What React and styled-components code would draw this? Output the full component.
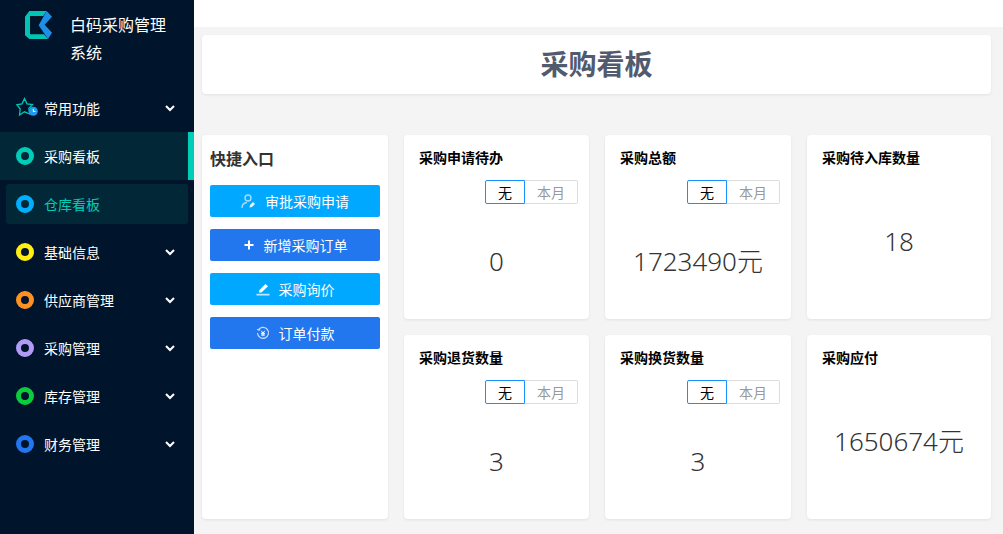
import React from 'react';
import styled, { createGlobalStyle } from 'styled-components';

const GlobalStyle = createGlobalStyle`
  html, body {
    margin: 0;
    padding: 0;
    background: #f4f4f4;
  }
  body {
    font-family: "Noto Sans CJK SC", "Noto Sans", sans-serif;
  }
`;

const menu = [
  { label: '采购看板', ring: '#00cdb8', active: true },
  { label: '仓库看板', ring: '#00b0ff', hover: true },
  { label: '基础信息', ring: '#ffee11', arrow: true },
  { label: '供应商管理', ring: '#ff9022', arrow: true },
  { label: '采购管理', ring: '#b09cf5', arrow: true },
  { label: '库存管理', ring: '#0ccb3c', arrow: true },
  { label: '财务管理', ring: '#2277f0', arrow: true },
];

const stats = [
  { title: '采购申请待办', value: '0', toggle: true },
  { title: '采购总额', value: '1723490元', toggle: true },
  { title: '采购待入库数量', value: '18' },
  { title: '采购退货数量', value: '3', toggle: true },
  { title: '采购换货数量', value: '3', toggle: true },
  { title: '采购应付', value: '1650674元' },
];

const UserIcon = () => (
  <svg width="15" height="15" viewBox="0 0 15 15" fill="none" stroke="#a9dcff" strokeWidth="1.4">
    <circle cx="7" cy="4" r="3" />
    <path d="M1 14c0-3.500 2-5.200 5-5.500" />
    <path d="M8.500 13.500l.5-2.500 3-3 2 2-3 3z" fill="#e4f5ff" stroke="none" />
  </svg>
);

const PlusIcon = () => (
  <svg width="12" height="12" viewBox="0 0 12 12" fill="none" stroke="#fff" strokeWidth="2">
    <path d="M6 1.500v9M1.500 6h9" />
  </svg>
);

const PenIcon = () => (
  <svg width="14" height="14" viewBox="0 0 14 14">
    <path d="M3 8.500L9.500 2l2.500 2.200-6.500 6.300H3z" fill="#fff" />
    <rect x="0.500" y="11.800" width="13" height="1.700" fill="#bfe9ff" />
  </svg>
);

const PayIcon = () => (
  <svg width="14" height="14" viewBox="0 0 14 14" fill="none" stroke="#c5d9fa" strokeWidth="1.200">
    <path d="M2 4.500A5.500 5.500 0 1 1 1.500 7" />
    <path d="M1 3.500h2.500v1" />
    <path d="M5.200 4.800L7 7l1.800-2.200M5 7.300h4M5 9h4M7 7v3.200" stroke="#fff" strokeWidth="1" />
  </svg>
);

const actions = [
  { label: '审批采购申请', tone: '#00a8ff', icon: <UserIcon /> },
  { label: '新增采购订单', tone: '#2277ee', icon: <PlusIcon /> },
  { label: '采购询价', tone: '#00a8ff', icon: <PenIcon /> },
  { label: '订单付款', tone: '#2277ee', icon: <PayIcon /> },
];

const Logo = () => (
  <LogoMark width="27" height="28" viewBox="15 15 81 84">
    <path d="M15 32L28 15h52L70 30H30v55h42l12 14H28L15 88z" fill="#00c4b4" />
    <path d="M80 15l16 17-22 24 22 24-12 19-28-41z" fill="#1c8fe8" />
  </LogoMark>
);

const StarIcon = () => (
  <StarMark width="22" height="22" viewBox="0 0 22 22" fill="none">
    <path
      d="M8.500 1.500L11 6.800l5.500.7-3.700 4 1 5.500-5.300-2.200-5 3.200.7-6L.8 7.800 6 6.800z"
      stroke="#00c4b4"
      strokeWidth="1.300"
    />
    <circle cx="17.300" cy="14.300" r="4.500" fill="#1f9bf0" />
    <path d="M17.300 12v2.500h2.200" stroke="#fff" strokeWidth="1" />
  </StarMark>
);

const Chevron = () => (
  <svg width="10" height="7" viewBox="0 0 10 7" fill="none" stroke="#fff" strokeWidth="2">
    <path d="M1 1l4 4 4-4" />
  </svg>
);

const App = () => (
  <Page>
    <GlobalStyle />
    <Sidebar>
      <Brand>
        <Logo />
        <BrandName>白码采购管理系统</BrandName>
      </Brand>
      <MenuRow>
        <IconSlot><StarIcon /></IconSlot>
        <MenuLabel>常用功能</MenuLabel>
        <Chevron />
      </MenuRow>
      {menu.map((item) => (
        <MenuRow key={item.label} $active={item.active} $hover={item.hover}>
          <IconSlot><Ring $color={item.ring} /></IconSlot>
          <MenuLabel $accent={item.hover}>{item.label}</MenuLabel>
          {item.arrow && <Chevron />}
        </MenuRow>
      ))}
    </Sidebar>
    <Main>
      <TopBar />
      <Content>
        <TitleCard>采购看板</TitleCard>
        <Board>
          <QuickCard>
            <QuickTitle>快捷入口</QuickTitle>
            {actions.map((action) => (
              <ActionButton key={action.label} $tone={action.tone}>
                {action.icon}
                {action.label}
              </ActionButton>
            ))}
          </QuickCard>
          {stats.map((stat) => (
            <StatCard key={stat.title}>
              <StatTitle>{stat.title}</StatTitle>
              {stat.toggle && (
                <Toggle>
                  <ToggleItem $on>无</ToggleItem>
                  <ToggleItem>本月</ToggleItem>
                </Toggle>
              )}
              <StatValue $raised={!stat.toggle}>{stat.value}</StatValue>
            </StatCard>
          ))}
        </Board>
      </Content>
    </Main>
  </Page>
);

export default App;

// Styles
const Page = styled.div`
  display: flex;
  width: 1003px;
  height: 534px;
  overflow: hidden;
`;

const Sidebar = styled.aside`
  flex: 0 0 194px;
  background: #00152b;
  color: #fff;
`;

const Brand = styled.div`
  display: flex;
  align-items: flex-start;
  height: 84px;
  padding: 11px 0 0 25px;
  box-sizing: border-box;
`;

const LogoMark = styled.svg`
  flex-shrink: 0;
  margin-right: 18px;
`;

const BrandName = styled.div`
  width: 100px;
  margin-top: -1px;
  font-size: 16px;
  line-height: 28px;
`;

const MenuRow = styled.div`
  display: flex;
  align-items: center;
  height: 48px;
  padding: 0 19px 0 16px;
  box-sizing: border-box;
  font-size: 14px;
  ${(p) => p.$active && `
    background: #022838;
    border-right: 6px solid #00cdb8;
    padding-right: 13px;
  `}
  ${(p) => p.$hover && `
    position: relative;
    z-index: 0;
    &::before {
      content: '';
      position: absolute;
      z-index: -1;
      inset: 4px 6px 4px 6px;
      background: #022838;
      border-radius: 3px;
    }
  `}
`;

const IconSlot = styled.span`
  display: flex;
  align-items: center;
  flex: 0 0 18px;
  min-width: 0;
  margin-right: 10px;
`;

const StarMark = styled.svg`
  flex-shrink: 0;
`;

const Ring = styled.span`
  width: 18px;
  height: 18px;
  border: 5px solid ${(p) => p.$color};
  border-radius: 50%;
  box-sizing: border-box;
`;

const MenuLabel = styled.span`
  flex: 1;
  color: ${(p) => (p.$accent ? '#00cdb8' : '#fff')};
`;

const Main = styled.main`
  flex: 1;
  min-width: 0;
  display: flex;
  flex-direction: column;
`;

const TopBar = styled.div`
  flex: 0 0 27px;
  background: #fff;
`;

const Content = styled.div`
  flex: 1;
  padding: 8px 12px 0 8px;
  background: #f4f4f4;
`;

const TitleCard = styled.h1`
  display: flex;
  align-items: center;
  justify-content: center;
  height: 59px;
  padding-bottom: 4px;
  box-sizing: border-box;
  margin: 0 0 41px;
  background: #fff;
  border-radius: 4px;
  box-shadow: 0 1px 3px rgba(0, 0, 0, 0.08);
  color: #525a6e;
  font-size: 28px;
  font-weight: 700;
`;

const Board = styled.div`
  display: grid;
  grid-template-columns: 186px 185px 186px 184px;
  grid-template-rows: 184px 184px;
  gap: 16px;
`;

const Card = styled.section`
  background: #fff;
  border-radius: 4px;
  box-shadow: 0 1px 3px rgba(0, 0, 0, 0.08);
  box-sizing: border-box;
`;

const QuickCard = styled(Card)`
  grid-row: 1 / span 2;
  padding: 11px 8px;
`;

const QuickTitle = styled.div`
  margin-bottom: 14px;
  color: #333;
  font-size: 16px;
  font-weight: 700;
  line-height: 25px;
`;

const ActionButton = styled.div`
  display: flex;
  align-items: center;
  justify-content: center;
  gap: 9px;
  height: 32px;
  margin-bottom: 12px;
  background: ${(p) => p.$tone};
  border-radius: 2px;
  color: #fff;
  font-size: 14px;
`;

const StatCard = styled(Card)`
  display: flex;
  flex-direction: column;
  padding: 12px 15px 0;
`;

const StatTitle = styled.div`
  color: #000;
  font-size: 14px;
  font-weight: 700;
  line-height: 20px;
`;

const Toggle = styled.div`
  align-self: flex-end;
  display: flex;
  margin: 13px -4px 0 0;
`;

const ToggleItem = styled.span`
  display: flex;
  align-items: center;
  justify-content: center;
  width: ${(p) => (p.$on ? '40px' : '53px')};
  height: 24px;
  box-sizing: border-box;
  border: 1px solid ${(p) => (p.$on ? '#1890ff' : '#dcdcdc')};
  border-left-width: ${(p) => (p.$on ? '1px' : '0')};
  border-radius: ${(p) => (p.$on ? '2px 0 0 2px' : '0 2px 2px 0')};
  color: ${(p) => (p.$on ? '#000' : '#999')};
  font-size: 14px;
`;

const StatValue = styled.div`
  margin-top: ${(p) => (p.$raised ? '56px' : '39px')};
  color: #333;
  font-family: "Noto Sans", "Noto Sans CJK SC", sans-serif;
  font-weight: 300;
  font-size: 26px;
  line-height: 36px;
  text-align: center;
`;
